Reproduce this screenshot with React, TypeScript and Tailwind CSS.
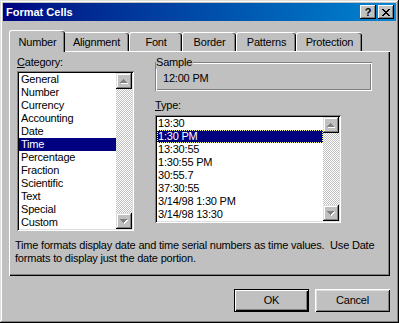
import React from "react";

const categories = [
  "General",
  "Number",
  "Currency",
  "Accounting",
  "Date",
  "Time",
  "Percentage",
  "Fraction",
  "Scientific",
  "Text",
  "Special",
  "Custom",
];

const types = [
  "13:30",
  "1:30 PM",
  "13:30:55",
  "1:30:55 PM",
  "30:55.7",
  "37:30:55",
  "3/14/98 1:30 PM",
  "3/14/98 13:30",
];

const tabs = [
  { label: "Number", w: "w-[56px]", active: true },
  { label: "Alignment", w: "w-[66px]" },
  { label: "Font", w: "w-[53px]" },
  { label: "Border", w: "w-[54px]" },
  { label: "Patterns", w: "w-[60px]" },
  { label: "Protection", w: "w-[66px]" },
];

// draws a pixel pattern as rects
function Pixels({ rows, color }: { rows: string[]; color: string }) {
  const rects: JSX.Element[] = [];
  rows.forEach((row, y) =>
    row.split("").forEach((c, x) => {
      if (c === "#") rects.push(<rect key={`${x}-${y}`} x={x} y={y} width={1} height={1} fill={color} />);
    })
  );
  return <>{rects}</>;
}

const closeGlyph = [
  "##....##",
  ".##..##.",
  "..####..",
  "...##...",
  "..####..",
  ".##..##.",
  "##....##",
];

const upArrow = ["...#...", "..###..", ".#####.", "#######"];
const downArrow = ["#######", ".#####.", "..###..", "...#..."];

function Arrow({ up }: { up?: boolean }) {
  const rows = up ? upArrow : downArrow;
  return (
    <svg width="8" height="5" viewBox="0 0 8 5" shapeRendering="crispEdges">
      <g transform="translate(1 1)">
        <Pixels rows={rows} color="#ffffff" />
      </g>
      <Pixels rows={rows} color="#808080" />
    </svg>
  );
}

function ScrollBar() {
  return (
    <div className="flex flex-col w-[16px] shrink-0">
      <div className="h-[16px] flex items-center justify-center bg-[#c0c0c0] shadow-[inset_-1px_-1px_0_#000,inset_1px_1px_0_#dfdfdf,inset_-2px_-2px_0_#808080,inset_2px_2px_0_#fff]">
        <Arrow up />
      </div>
      <div className="flex-1 bg-[image:repeating-conic-gradient(#ffffff_0%_25%,#c0c0c0_0%_50%)] bg-[length:2px_2px]" />
      <div className="h-[16px] flex items-center justify-center bg-[#c0c0c0] shadow-[inset_-1px_-1px_0_#000,inset_1px_1px_0_#dfdfdf,inset_-2px_-2px_0_#808080,inset_2px_2px_0_#fff]">
        <Arrow />
      </div>
    </div>
  );
}

function ListBox({
  items,
  selected,
  focused,
  className,
  itemPad,
}: {
  items: string[];
  selected: string;
  focused?: boolean;
  className: string;
  itemPad: string;
}) {
  return (
    <div className={`flex p-[2px] bg-white shadow-[inset_1px_1px_0_#808080,inset_-1px_-1px_0_#fff,inset_2px_2px_0_#000,inset_-2px_-2px_0_#dfdfdf] ${className}`}>
      <div className="flex-1 flex flex-col">
        {items.map((item) => (
          <div
            key={item}
            className={`h-[13px] whitespace-nowrap ${itemPad} ${
              item === selected
                ? `bg-[#000080] text-white ${focused ? "outline-1 outline-dotted outline-[#ffff80] -outline-offset-1" : ""}`
                : ""
            }`}
          >
            {item}
          </div>
        ))}
      </div>
      <ScrollBar />
    </div>
  );
}

export default function App() {
  return (
    <div className="w-[399px] h-[323px] flex flex-col p-[3px] bg-[#c0c0c0] text-black text-[11px] leading-[13px] tracking-[-0.2px] font-['Liberation_Sans',Arial,sans-serif] shadow-[inset_-1px_-1px_0_#000,inset_1px_1px_0_#dfdfdf,inset_-2px_-2px_0_#808080,inset_2px_2px_0_#fff]">
      {/* Title bar */}
      <div className="flex items-center h-[18px] pl-[3px] pr-[2px] bg-linear-to-r from-[#000080] to-[#1084d0]">
        <span className="flex-1 font-bold text-white tracking-normal">Format Cells</span>
        <div className="w-[16px] h-[14px] flex items-center justify-center bg-[#c0c0c0] font-bold text-[11px] shadow-[inset_-1px_-1px_0_#000,inset_1px_1px_0_#fff,inset_-2px_-2px_0_#808080]">
          ?
        </div>
        <div className="ml-[2px] w-[16px] h-[14px] flex items-center justify-center bg-[#c0c0c0] shadow-[inset_-1px_-1px_0_#000,inset_1px_1px_0_#fff,inset_-2px_-2px_0_#808080]">
          <svg width="8" height="7" viewBox="0 0 8 7" shapeRendering="crispEdges">
            <Pixels rows={closeGlyph} color="#000000" />
          </svg>
        </div>
      </div>

      {/* Tabs */}
      <div className="flex items-end h-[21px] mt-[9px] ml-[8px]">
        {tabs.map((t) => (
          <div
            key={t.label}
            className={`${t.w} text-center rounded-t-[3px] border-l border-t border-white bg-[#c0c0c0] shadow-[inset_-1px_0_0_#000,inset_-2px_0_0_#808080] ${
              t.active ? "relative z-10 -mx-[2px] -mb-[1px] h-[22px] pt-[5px]" : "h-[19px] pt-[3px]"
            }`}
          >
            {t.label}
          </div>
        ))}
      </div>

      {/* Tab panel */}
      <div className="ml-[6px] w-[381px] h-[225px] flex flex-col pt-[5px] shadow-[inset_1px_1px_0_#fff,inset_-1px_-1px_0_#000,inset_-2px_-2px_0_#808080]">
        <div className="flex">
          <div className="ml-[8px] flex flex-col">
            <div>
              <span className="underline">C</span>ategory:
            </div>
            <ListBox className="mt-[2px] w-[117px]" items={categories} selected="Time" itemPad="pl-[2px]" />
          </div>

          <div className="ml-[21px] flex flex-col w-[217px]">
            <div className="relative mt-[6px] h-[29px] pt-[10px] pl-[8px] shadow-[inset_1px_1px_0_#808080,inset_-1px_-1px_0_#fff,inset_2px_2px_0_#fff,inset_-2px_-2px_0_#808080]">
              <span className="absolute left-[1px] -top-[6px] pr-[1px] bg-[#c0c0c0]">Sample</span>
              12:00 PM
            </div>
            <div className="mt-[8px]">
              <span className="underline">T</span>ype:
            </div>
            <ListBox className="mt-[3px] w-[186px]" items={types} selected="1:30 PM" focused itemPad="pl-[1px]" />
          </div>
        </div>

        <div className="mt-[8px] pl-[6px] whitespace-pre">
          {"Time formats display date and time serial numbers as time values.  Use Date"}
          <br />
          {"formats to display just the date portion."}
        </div>
      </div>

      {/* Buttons */}
      <div className="flex justify-end gap-[6px] mt-[13px] pr-[6px]">
        <button className="w-[75px] h-[23px] bg-[#c0c0c0] shadow-[inset_0_0_0_1px_#000,inset_2px_2px_0_#fff,inset_-2px_-2px_0_#000,inset_-3px_-3px_0_#808080]">
          OK
        </button>
        <button className="w-[75px] h-[23px] bg-[#c0c0c0] shadow-[inset_1px_1px_0_#fff,inset_-1px_-1px_0_#000,inset_2px_2px_0_#dfdfdf,inset_-2px_-2px_0_#808080]">
          Cancel
        </button>
      </div>
    </div>
  );
}
